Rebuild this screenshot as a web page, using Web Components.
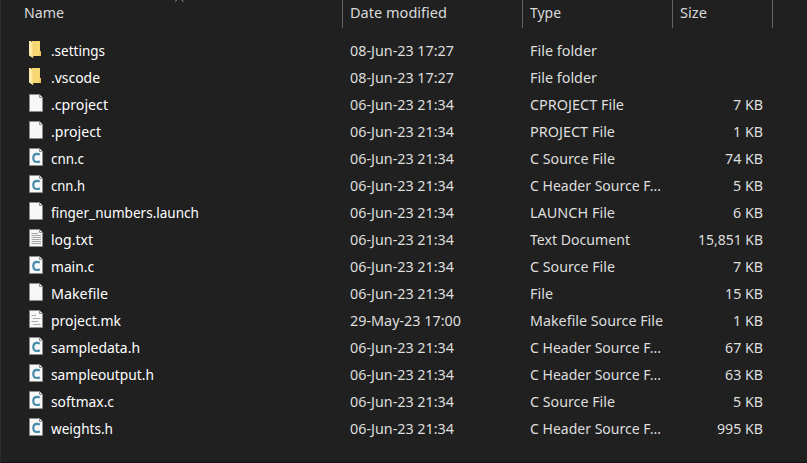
<!DOCTYPE html>
<html lang="en"><head><meta charset="utf-8"><title>Files</title>
<style>html,body{margin:0;background:#202020;height:100%;overflow:hidden}</style></head>
<body><file-list></file-list>
<script>
// Text run laid out at a fixed advance width, given by the w attribute
class FitText extends HTMLElement{
  connectedCallback(){
    if(this.shadowRoot)return;
    const r=this.attachShadow({mode:'open'});
    r.innerHTML='<style>:host{display:block;white-space:pre}span{display:inline-block;transform-origin:0 50%}</style><span></span>';
    const s=r.querySelector('span');
    s.textContent=this.getAttribute('text');
    const w=+this.getAttribute('w');
    this.style.width=w+'px';
    s.style.transform='scaleX('+w/s.getBoundingClientRect().width+')';
  }
}
customElements.define('fit-text',FitText);

const page='<path d="M.5 .5H10.5L13.5 3.5V17.5H.5Z" fill="#f7f7f7" stroke="#8d8d8d"/><path d="M10.5 .5V3.5H13.5" fill="#e4e4e4" stroke="#8d8d8d"/>';
const icons={
  folder:'<path d="M3 0H11V10H12V15H3Z" fill="#f8d873"/><path d="M10.4 10H12V15H10.4Z" fill="#edc257"/><path d="M0 0H2L4 2.5V17L0 14.5Z" fill="#ffe9a6"/><path d="M4 2.5V17" stroke="#eec35c" stroke-width=".6"/>',
  file:page,
  c:page+'<path d="M10.8 6.6C9.8 6.1 9 5.9 8.1 5.9C5.6 5.9 4.3 7.5 4.3 10S5.7 14 8 14C9.1 14 10 13.8 10.8 13.3" fill="none" stroke="#468cab" stroke-width="2.2"/>',
  text:page+'<path d="M2.5 4.5H9M2.5 6.5H12M2.5 8.5H12M2.5 10.5H12M2.5 12.5H12M2.5 14.5H12" stroke="#999" stroke-width=".9"/>',
  mk:page+'<path d="M2.5 5.5H7M4 8.5H11.5M2.5 11.5H9M4 14.5H11.5" stroke="#aaa"/>'
};
class FileIcon extends HTMLElement{
  connectedCallback(){
    this.attachShadow({mode:'open'}).innerHTML='<style>:host{display:block;width:15px;height:18px}svg{display:block}</style><svg width="15" height="18" viewBox="0 0 15 18">'+icons[this.getAttribute('kind')]+'</svg>';
  }
}
customElements.define('file-icon',FileIcon);

class FileRow extends HTMLElement{
  connectedCallback(){
    const [kind,name,nw,date,dw,type,tw,size,sw]=JSON.parse(this.getAttribute('data'));
    const t=(x,w)=>x?`<fit-text text="${x}" w="${w}"></fit-text>`:'<i></i>';
    this.attachShadow({mode:'open'}).innerHTML=`<style>
      :host{display:grid;grid-template-columns:22px 299px 180px 143px 90px;height:27px;line-height:27px;padding-left:29px;color:#dedede}
      file-icon{padding-top:${kind==='folder'?4:3}px}
      .name{color:#fff}.size{display:flex;justify-content:flex-end}
    </style><file-icon kind="${kind}"></file-icon><div class="name">${t(name,nw)}</div><div>${t(date,dw)}</div><div>${t(type,tw)}</div><div class="size">${t(size,sw)}</div>`;
  }
}
customElements.define('file-row',FileRow);

class ListHeader extends HTMLElement{
  connectedCallback(){
    this.attachShadow({mode:'open'}).innerHTML=`<style>
      :host{display:grid;position:relative;grid-template-columns:319px 180px 150px 100px;height:28px;line-height:24px;padding-left:24px;color:#dadada}
      div{border-right:1px solid #636363;box-sizing:border-box}
      div+div{padding-left:7px}
      svg{position:absolute;left:174px;top:0}
    </style><svg width="11" height="3"><path d="M4 -1.2L1 1.6M6.5 -1.2L9.5 1.6" fill="none" stroke="#9a9a9a"/></svg>
    <div><fit-text text="Name" w="40"></fit-text></div><div><fit-text text="Date modified" w="97"></fit-text></div><div><fit-text text="Type" w="31"></fit-text></div><div><fit-text text="Size" w="27"></fit-text></div>`;
  }
}
customElements.define('list-header',ListHeader);

const J='06-Jun-23 21:34',H=['C Header Source F...',131],C=['C Source File',85];
const rows=[
 ['folder','.settings',54,'08-Jun-23 17:27',104,'File folder',67],
 ['folder','.vscode',49,'08-Jun-23 17:27',104,'File folder',67],
 ['file','.cproject',57,J,104,'CPROJECT File',94,'7 KB',30],
 ['file','.project',50,J,104,'PROJECT File',85,'1 KB',30],
 ['c','cnn.c',33,J,104,...C,'74 KB',38],
 ['c','cnn.h',34,J,104,...H,'5 KB',30],
 ['file','finger_numbers.launch',148,J,104,'LAUNCH File',85,'6 KB',30],
 ['text','log.txt',42,J,104,'Text Document',100,'15,851 KB',65],
 ['c','main.c',43,J,104,...C,'7 KB',30],
 ['file','Makefile',57,J,104,'File',23,'15 KB',38],
 ['mk','project.mk',70,'29-May-23 17:00',111,'Makefile Source File',133,'1 KB',30],
 ['c','sampledata.h',89,J,104,...H,'67 KB',38],
 ['c','sampleoutput.h',103,J,104,...H,'63 KB',38],
 ['c','softmax.c',63,J,104,...C,'5 KB',30],
 ['c','weights.h',62,J,104,...H,'995 KB',46]
];
class FileList extends HTMLElement{
  connectedCallback(){
    const r=this.attachShadow({mode:'open'});
    r.innerHTML='<style>:host{display:block;box-sizing:border-box;height:463px;font:14.7px "Noto Sans","Open Sans",sans-serif;background:linear-gradient(90deg,#2b2b2b 1px,#202020 1px);border-bottom:1px solid #171314}section{padding-top:9px}</style><list-header></list-header><section></section>';
    const s=r.querySelector('section');
    for(const d of rows){const e=document.createElement('file-row');e.setAttribute('data',JSON.stringify(d));s.append(e)}
  }
}
customElements.define('file-list',FileList);
</script></body></html>
